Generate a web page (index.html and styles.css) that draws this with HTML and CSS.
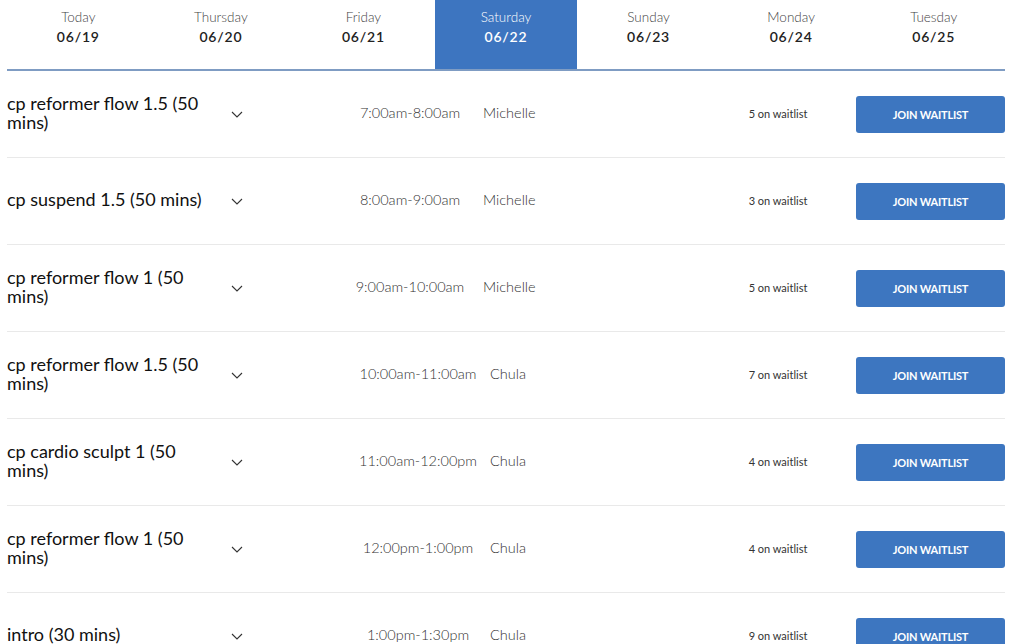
FILE: index.html
```html
<!DOCTYPE html>
<html>
<head>
<meta charset="utf-8">
<link rel="stylesheet" href="styles.css">
</head>
<body>
<div class="schedule">
  <nav class="days">
    <div class="day"><span class="day-name">Today</span><span class="day-date">06/19</span></div>
    <div class="day"><span class="day-name">Thursday</span><span class="day-date">06/20</span></div>
    <div class="day"><span class="day-name">Friday</span><span class="day-date">06/21</span></div>
    <div class="day active"><span class="day-name">Saturday</span><span class="day-date">06/22</span></div>
    <div class="day"><span class="day-name">Sunday</span><span class="day-date">06/23</span></div>
    <div class="day"><span class="day-name">Monday</span><span class="day-date">06/24</span></div>
    <div class="day"><span class="day-name">Tuesday</span><span class="day-date">06/25</span></div>
  </nav>

  <div class="row">
    <div class="name">cp reformer flow 1.5 (50 mins)</div>
    <div class="chev"><svg viewBox="0 0 12 7" width="12" height="7"><path d="M1 1l5 5 5-5" fill="none" stroke="#333" stroke-width="1.1"/></svg></div>
    <div class="time">7:00am-8:00am</div>
    <div class="coach">Michelle</div>
    <div class="wait">5 on waitlist</div>
    <button class="btn">JOIN WAITLIST</button>
  </div>

  <div class="row">
    <div class="name">cp suspend 1.5 (50 mins)</div>
    <div class="chev"><svg viewBox="0 0 12 7" width="12" height="7"><path d="M1 1l5 5 5-5" fill="none" stroke="#333" stroke-width="1.1"/></svg></div>
    <div class="time">8:00am-9:00am</div>
    <div class="coach">Michelle</div>
    <div class="wait">3 on waitlist</div>
    <button class="btn">JOIN WAITLIST</button>
  </div>

  <div class="row">
    <div class="name">cp reformer flow 1 (50 mins)</div>
    <div class="chev"><svg viewBox="0 0 12 7" width="12" height="7"><path d="M1 1l5 5 5-5" fill="none" stroke="#333" stroke-width="1.1"/></svg></div>
    <div class="time">9:00am-10:00am</div>
    <div class="coach">Michelle</div>
    <div class="wait">5 on waitlist</div>
    <button class="btn">JOIN WAITLIST</button>
  </div>

  <div class="row late">
    <div class="name">cp reformer flow 1.5 (50 mins)</div>
    <div class="chev"><svg viewBox="0 0 12 7" width="12" height="7"><path d="M1 1l5 5 5-5" fill="none" stroke="#333" stroke-width="1.1"/></svg></div>
    <div class="time">10:00am-11:00am</div>
    <div class="coach">Chula</div>
    <div class="wait">7 on waitlist</div>
    <button class="btn">JOIN WAITLIST</button>
  </div>

  <div class="row late">
    <div class="name">cp cardio sculpt 1 (50 mins)</div>
    <div class="chev"><svg viewBox="0 0 12 7" width="12" height="7"><path d="M1 1l5 5 5-5" fill="none" stroke="#333" stroke-width="1.1"/></svg></div>
    <div class="time">11:00am-12:00pm</div>
    <div class="coach">Chula</div>
    <div class="wait">4 on waitlist</div>
    <button class="btn">JOIN WAITLIST</button>
  </div>

  <div class="row late">
    <div class="name">cp reformer flow 1 (50 mins)</div>
    <div class="chev"><svg viewBox="0 0 12 7" width="12" height="7"><path d="M1 1l5 5 5-5" fill="none" stroke="#333" stroke-width="1.1"/></svg></div>
    <div class="time">12:00pm-1:00pm</div>
    <div class="coach">Chula</div>
    <div class="wait">4 on waitlist</div>
    <button class="btn">JOIN WAITLIST</button>
  </div>

  <div class="row late">
    <div class="name">intro (30 mins)</div>
    <div class="chev"><svg viewBox="0 0 12 7" width="12" height="7"><path d="M1 1l5 5 5-5" fill="none" stroke="#333" stroke-width="1.1"/></svg></div>
    <div class="time">1:00pm-1:30pm</div>
    <div class="coach">Chula</div>
    <div class="wait">9 on waitlist</div>
    <button class="btn">JOIN WAITLIST</button>
  </div>
</div>
</body>
</html>
```

FILE: styles.css
```css
html, body {
  margin: 0;
  padding: 0;
  background: #fff;
  overflow: hidden;
}
body {
  font-family: Lato, "Liberation Sans", sans-serif;
  color: #222;
}
.schedule {
  margin-left: 7px;
  width: 998px;
}
.days {
  display: grid;
  grid-template-columns: repeat(7, 1fr);
  height: 69px;
  border-bottom: 2px solid #7f9cc3;
}
.day {
  display: flex;
  flex-direction: column;
  align-items: center;
  padding-top: 9px;
  color: #333;
}
.day-name {
  font-size: 13.5px;
  font-weight: 300;
  line-height: 17px;
  color: #444;
}
.day-date {
  font-size: 14px;
  font-weight: 600;
  letter-spacing: 0.8px;
  line-height: 22px;
  color: #222;
}
.day.active {
  background: #3d75c0;
}
.day.active .day-name,
.day.active .day-date {
  color: #fff;
}
.row {
  display: grid;
  grid-template-columns: 210px 40px 80px 146px 237px 116px 20px 149px;
  align-items: center;
  height: 86px;
  border-bottom: 1px solid #e9e9e9;
}
.name {
  grid-column: 1;
  font-size: 18px;
  line-height: 19px;
  color: #111;
  margin-bottom: 3px;
}
.chev {
  grid-column: 2;
  display: flex;
  justify-content: center;
}
.chev svg {
  display: block;
}
.time {
  grid-column: 4;
  text-align: center;
  font-size: 14.5px;
  font-weight: 300;
  color: #333;
  margin-bottom: 4px;
}
.coach {
  grid-column: 5;
  font-size: 14.5px;
  font-weight: 300;
  color: #333;
  margin-bottom: 4px;
}
.late .time {
  transform: translateX(8px);
}
.late .coach {
  padding-left: 7px;
}
.wait {
  grid-column: 6;
  text-align: center;
  font-size: 11px;
  color: #333;
  margin-bottom: 2px;
}
.btn {
  grid-column: 8;
  height: 37px;
  border: none;
  border-radius: 3px;
  background: #3d76c0;
  color: #fff;
  font-family: Lato, "Liberation Sans", sans-serif;
  font-weight: 700;
  font-size: 11px;
  letter-spacing: -0.2px;
  padding: 0;
}
```
